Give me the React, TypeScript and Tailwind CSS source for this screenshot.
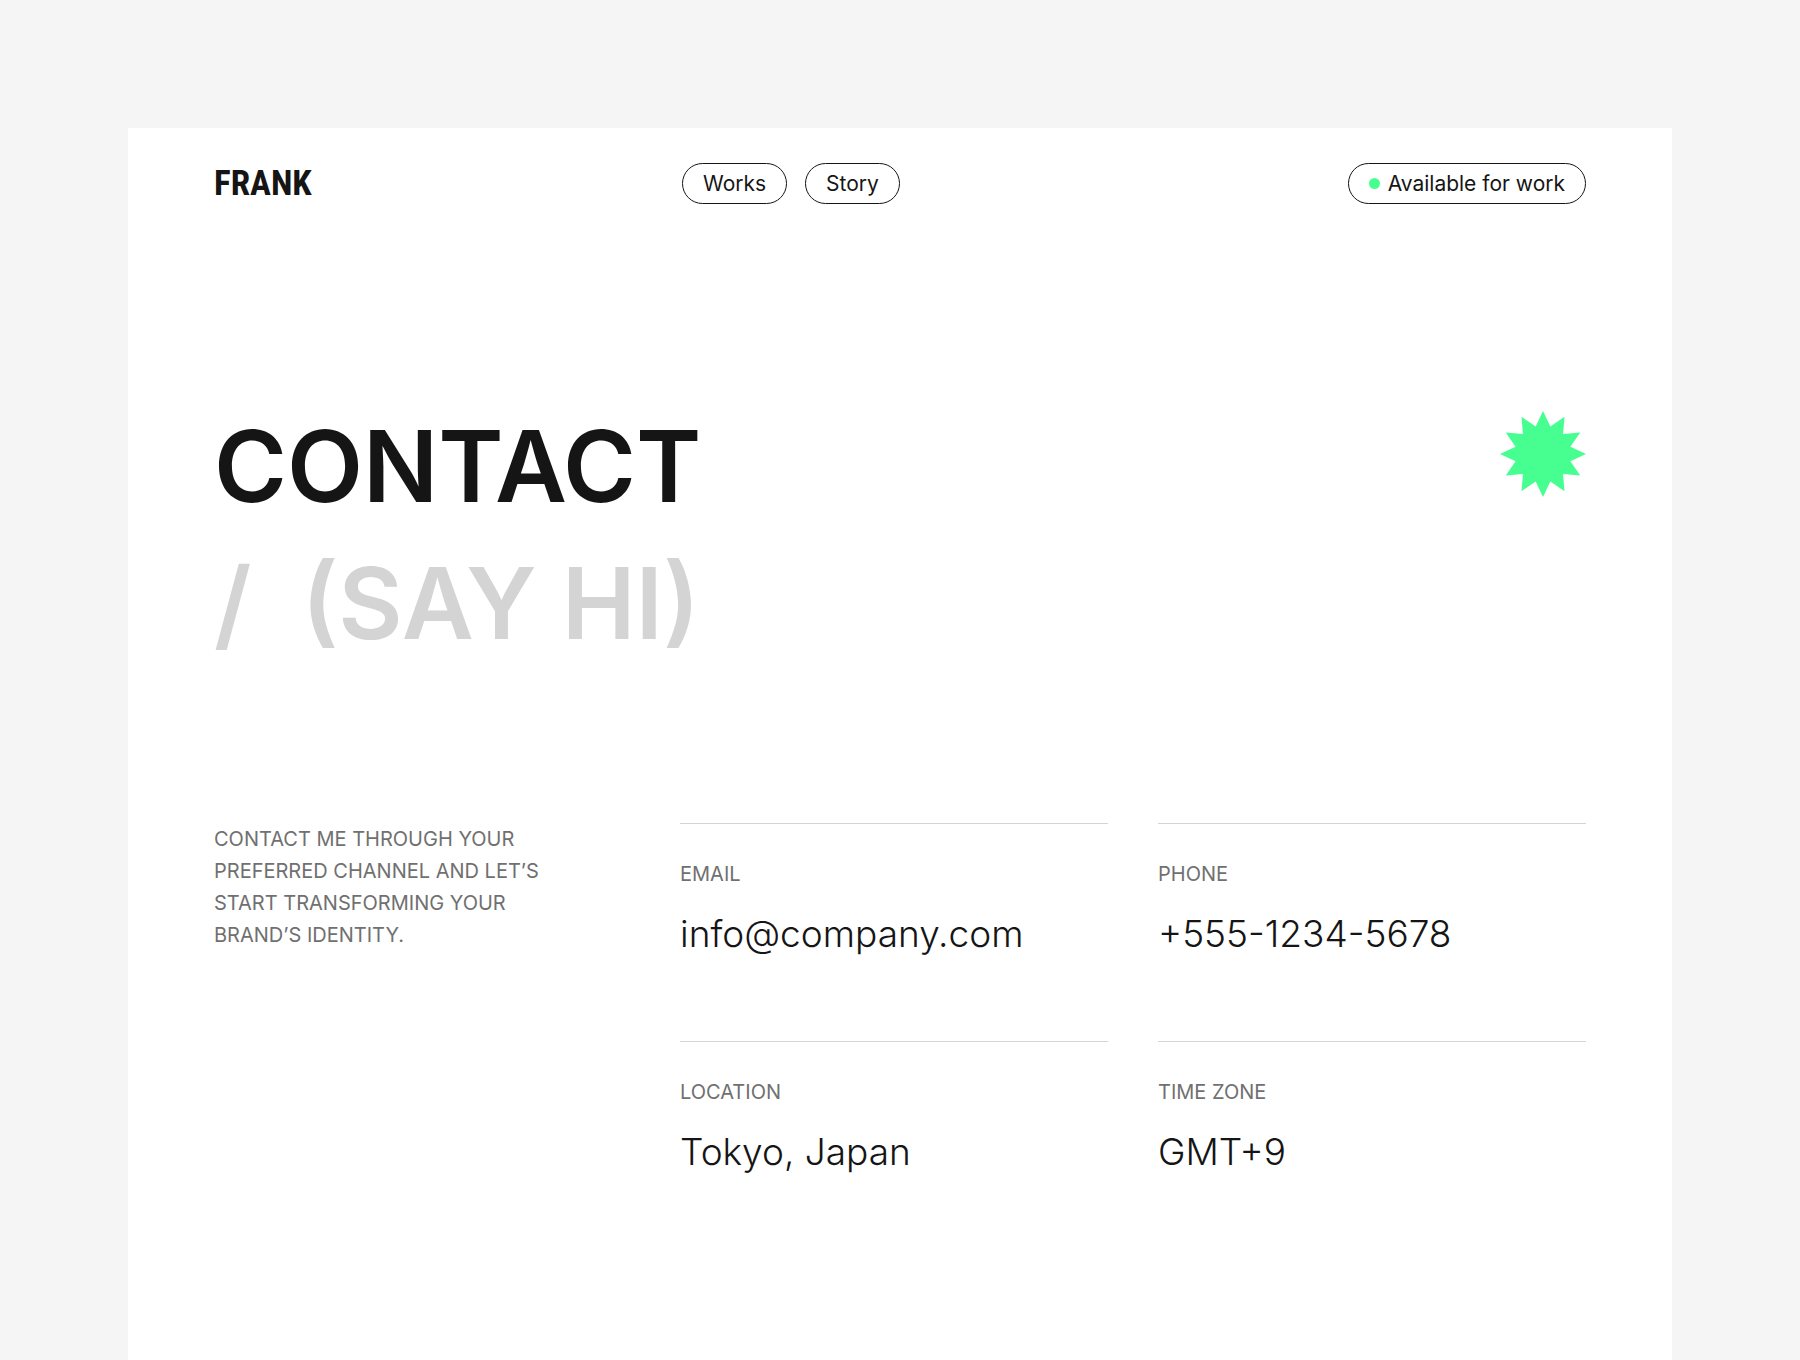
const details = [
  { label: 'Email', value: 'info@company.com', href: 'mailto:info@company.com' },
  { label: 'Phone', value: '+555-1234-5678', href: 'tel:+55512345678' },
  { label: 'Location', value: 'Tokyo, Japan' },
  { label: 'Time zone', value: 'GMT+9' },
];

// 12-pointed star, alternating outer and inner vertices
const starPoints = Array.from({ length: 24 }, (_, i) => {
  const radius = i % 2 === 0 ? 50 : 33;
  const angle = (i * Math.PI) / 12;
  return `${(50 + radius * Math.sin(angle)).toFixed(2)},${(50 - radius * Math.cos(angle)).toFixed(2)}`;
}).join(' ');

function Header() {
  return (
    <header className="grid grid-cols-[416fr_906fr] items-center gap-x-[50px]">
      <a href="#" className="font-['Roboto_Condensed','Liberation_Sans_Narrow',sans-serif] text-[35px] leading-[38px] font-bold">
        FRANK
      </a>
      <div className="flex items-center justify-between pl-0.5">
        <nav className="flex gap-[18px]">
          <a href="#works" className="rounded-full border border-[#151515] px-5 py-1 text-[21px] leading-[31px] whitespace-nowrap">
            Works
          </a>
          <a href="#story" className="rounded-full border border-[#151515] px-5 py-1 text-[21px] leading-[31px] whitespace-nowrap">
            Story
          </a>
        </nav>
        <a
          href="#contact"
          className="flex items-center gap-2 rounded-full border border-[#151515] px-5 py-1 text-[21px] leading-[31px] whitespace-nowrap"
        >
          <span className="size-[11px] rounded-full bg-[#47ff91]" />
          Available for work
        </a>
      </div>
    </header>
  );
}

function Hero() {
  return (
    <section className="mt-[194px] flex items-start justify-between">
      <h1 className="text-[99px] leading-[137px] font-semibold">
        CONTACT
        <span className="block whitespace-pre text-[#d4d4d4]">/  (SAY HI)</span>
      </h1>
      <svg viewBox="0 0 100 100" className="mt-[13px] size-[86px] shrink-0" aria-hidden="true">
        <polygon points={starPoints} fill="#47ff91" />
      </svg>
    </section>
  );
}

function Details() {
  return (
    <section id="contact" className="mt-[151px] grid grid-cols-[416fr_906fr] gap-x-[50px]">
      <p className="max-w-[340px] text-xl leading-8 text-[#707070] uppercase">
        Contact me through your preferred channel and let’s start transforming your brand’s identity.
      </p>
      <dl className="grid grid-cols-2 gap-x-[50px]">
        {details.map(({ label, value, href }) => (
          <div key={label} className="border-t border-[#d4d4d4] pt-[34px] pb-[81px]">
            <dt className="text-xl leading-8 text-[#707070] uppercase">{label}</dt>
            <dd className="mt-[18px] text-[37px] leading-[52px] font-light">
              {href ? <a href={href}>{value}</a> : value}
            </dd>
          </div>
        ))}
      </dl>
    </section>
  );
}

export default function App() {
  return (
    <div className="flex min-h-screen flex-col bg-[#f5f5f5] px-32 pt-32 font-['Inter',sans-serif] text-[#151515]">
      <main className="grow bg-white px-[86px] pt-[35px]">
        <Header />
        <Hero />
        <Details />
      </main>
    </div>
  );
}
